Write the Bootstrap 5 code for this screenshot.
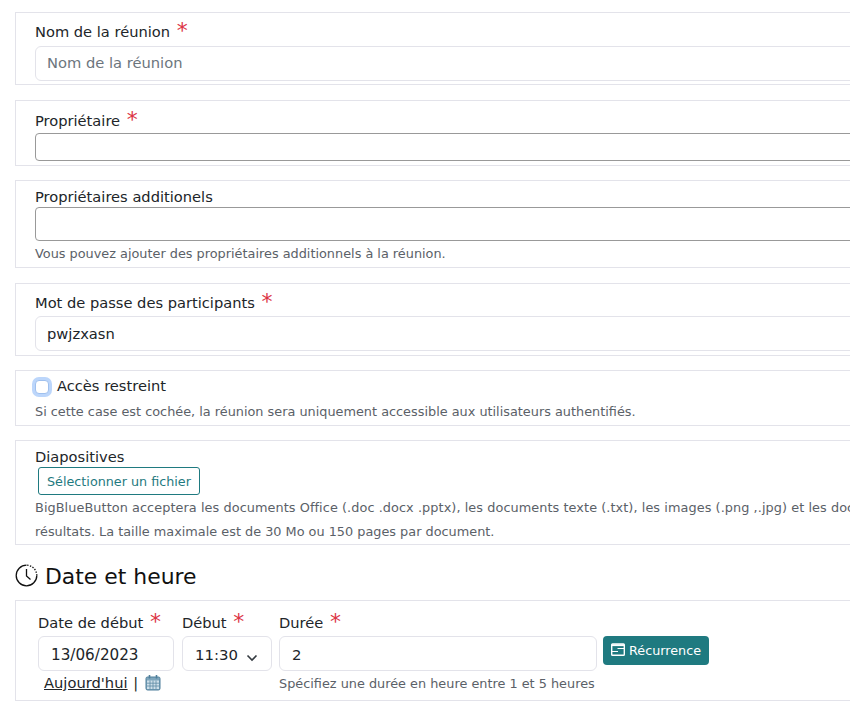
<!DOCTYPE html>
<html lang="fr"><head><meta charset="utf-8"><title>Réunion</title>
<link href="https://cdn.jsdelivr.net/npm/bootstrap@5.3.0/dist/css/bootstrap.min.css" rel="stylesheet">
<style>
html,body{overflow:hidden;height:712px;background:#fff}
body{font-family:"DejaVu Sans",sans-serif;font-size:14px;color:#212529}
.sheet{width:1200px;padding:12px 0 0 15px}
.fbox{border:1px solid #e3e3ea;padding:0 19px;margin-bottom:14px}
.fbox.b1{height:73px;padding-top:9px;margin-bottom:15px}
.fbox.b2{height:66px;padding-top:10px}
.fbox.b3{height:88px;padding-top:6px;margin-bottom:15px}
.fbox.b4{height:73px;padding-top:9px}
.fbox.b5{height:56px;padding-top:5px}
.fbox.b6{height:105px;padding-top:6px;margin-bottom:0}
.fbox.b7{height:101px;padding:12px 22px 0;margin-bottom:0}
.lab{font-size:14.65px;line-height:20px;margin:0;display:block;color:#212529}
.req{color:#dc3545;font-size:22px;line-height:14px;vertical-align:-1px;margin-left:2px;font-family:"DejaVu Sans",sans-serif}
.fld{display:block;width:100%;height:35px;border:1px solid #e3e3ea;border-radius:6px;padding:0 11px 1px;font-size:14.7px;line-height:32px;background:#fff;color:#212529;margin-top:4px}
.b1 .fld{padding-bottom:3px}
.fld::placeholder{color:#6c757d;opacity:1}
.fld.mid{margin-top:3px}
.fld.dark{border-color:#999;height:28px;margin-top:2px;border-radius:4px}
.fld.dark.tall{height:34px;margin-top:0}
.hint{font-size:12.85px;color:#5b6168;line-height:23px;margin:0;white-space:nowrap}
.b3 .hint{margin-top:1px}
.b6 .hint{line-height:24px;margin-top:1px}
.stretch{letter-spacing:.07px}
.chk{width:14px;height:14px;border:1px solid #9fc0ee;border-radius:4px;background:#fff;box-shadow:0 0 0 3px #bcd6fb;margin:4px 0 0;flex:none;appearance:none;display:block}
.chklab{font-size:14.65px;line-height:20px;margin-left:8px}
.chkrow{margin-bottom:4px}
.fbtn{display:block;width:162px;border:1px solid #1f7a80;color:#1f7a80;background:#fff;font-size:12.75px;line-height:18px;padding:5px 0 3px;text-align:center;border-radius:3px;margin:0 0 0 3px}
.headrow{height:55px;gap:7px;padding-top:5px}
.headrow h2{font-size:21.9px;font-weight:400;margin:0;padding-top:4px;color:#111;line-height:28px}
.c-date{width:136px}.c-time{width:90px;margin-left:8px}.c-dur{width:318px;margin-left:7px}
.fld.cen{padding:3px 11px 0 12px;font-size:14.9px;margin-top:3px}
.c-date .fld.cen{font-size:15.2px}
.arrow{position:relative}
.arrow svg{position:absolute;right:14px;top:18px}
.below{font-size:14.7px;line-height:20px;margin:2px 0 0 6px;white-space:nowrap}
.below a{color:#212529}
.sep{margin:0 7px 0 1px}
.durhint{line-height:18px;margin-top:4px}
.recbtn{background:#1f7a80;color:#fff;border:0;border-radius:4px;font-size:12.75px;font-weight:500;height:29px;width:106px;padding:0;margin-top:23px;margin-left:6px;white-space:nowrap;line-height:29px}
.recbtn svg{vertical-align:-1px}
</style></head><body>
<form class="sheet">
<div class="fbox b1"><label class="lab">Nom de la réunion <span class="req">*</span></label><input class="fld" placeholder="Nom de la réunion"></div>
<div class="fbox b2"><label class="lab">Propriétaire <span class="req">*</span></label><input class="fld dark"></div>
<div class="fbox b3"><label class="lab">Propriétaires additionels</label><input class="fld dark tall"><p class="hint">Vous pouvez ajouter des propriétaires additionnels à la réunion.</p></div>
<div class="fbox b4"><label class="lab">Mot de passe des participants <span class="req">*</span></label><input class="fld mid" value="pwjzxasn"></div>
<div class="fbox b5"><div class="d-flex chkrow"><input type="checkbox" class="chk"><label class="chklab">Accès restreint</label></div><p class="hint">Si cette case est cochée, la réunion sera uniquement accessible aux utilisateurs authentifiés.</p></div>
<div class="fbox b6"><label class="lab">Diapositives</label><span class="fbtn">Sélectionner un fichier</span><p class="hint"><span class="stretch">BigBlueButton acceptera les documents Office (.doc .docx .pptx), les documents texte (.txt), les images (.png ,.jpg) et les documents PDF (.pdf) pour de meilleurs</span><br>résultats. La taille maximale est de 30 Mo ou 150 pages par document.</p></div>
<div class="d-flex align-items-center headrow">
<svg width="23" height="23" viewBox="0 0 23 23" fill="none" stroke="#111" stroke-width="1.3"><path d="M11.5 1.2a10.3 10.3 0 1 0 10.3 10.3"/><path d="M21.8 11.5a10.3 10.3 0 0 0-10.3-10.3" stroke-dasharray="1.4 1.4"/><path d="M11.5 5v7l4 3.5"/></svg>
<h2>Date et heure</h2></div>
<div class="fbox b7 d-flex">
<div class="c-date"><label class="lab">Date de début <span class="req">*</span></label><input class="fld cen" value="13/06/2023">
<div class="below"><a href="#">Aujourd'hui</a> <span class="sep">|</span><svg width="16" height="17" viewBox="0 0 16 17" style="vertical-align:-3px"><rect x="1" y="3" width="14" height="13" rx="1.5" fill="#7fa6bd" stroke="#4f7f9b"/><rect x="2" y="6.5" width="12" height="8.5" fill="#cfe0ea"/><path d="M2 9.2h12M2 12h12M5 6.5V15M8 6.5V15M11 6.5V15" stroke="#5e8ba5" stroke-width=".8"/><path d="M4.5 1v3.5M11.5 1v3.5" stroke="#4f7f9b" stroke-width="1.6"/></svg></div></div>
<div class="c-time"><label class="lab">Début <span class="req">*</span></label><div class="arrow"><input class="fld cen" value="11:30"><svg width="12" height="8" viewBox="0 0 12 8" fill="none" stroke="#343a40" stroke-width="1.6"><path d="M1.5 1.5 6 6l4.5-4.5"/></svg></div></div>
<div class="c-dur"><label class="lab">Durée <span class="req">*</span></label><input class="fld cen" value="2"><p class="hint durhint">Spécifiez une durée en heure entre 1 et 5 heures</p></div>
<div><button type="button" class="recbtn"><svg width="14" height="13" viewBox="0 0 14 13" fill="none" stroke="#fff"><rect x=".7" y="1" width="12.6" height="11.3" rx=".8" stroke-width="1.4"/><path d="M1 2.2h12" stroke-width="1.8"/><path d="M6.5 5.5H13M1 8.5h6" stroke-width="1.2"/></svg> Récurrence</button></div>
</div>
</form>
<script src="https://cdn.jsdelivr.net/npm/bootstrap@5.3.0/dist/js/bootstrap.bundle.min.js"></script>
</body></html>
